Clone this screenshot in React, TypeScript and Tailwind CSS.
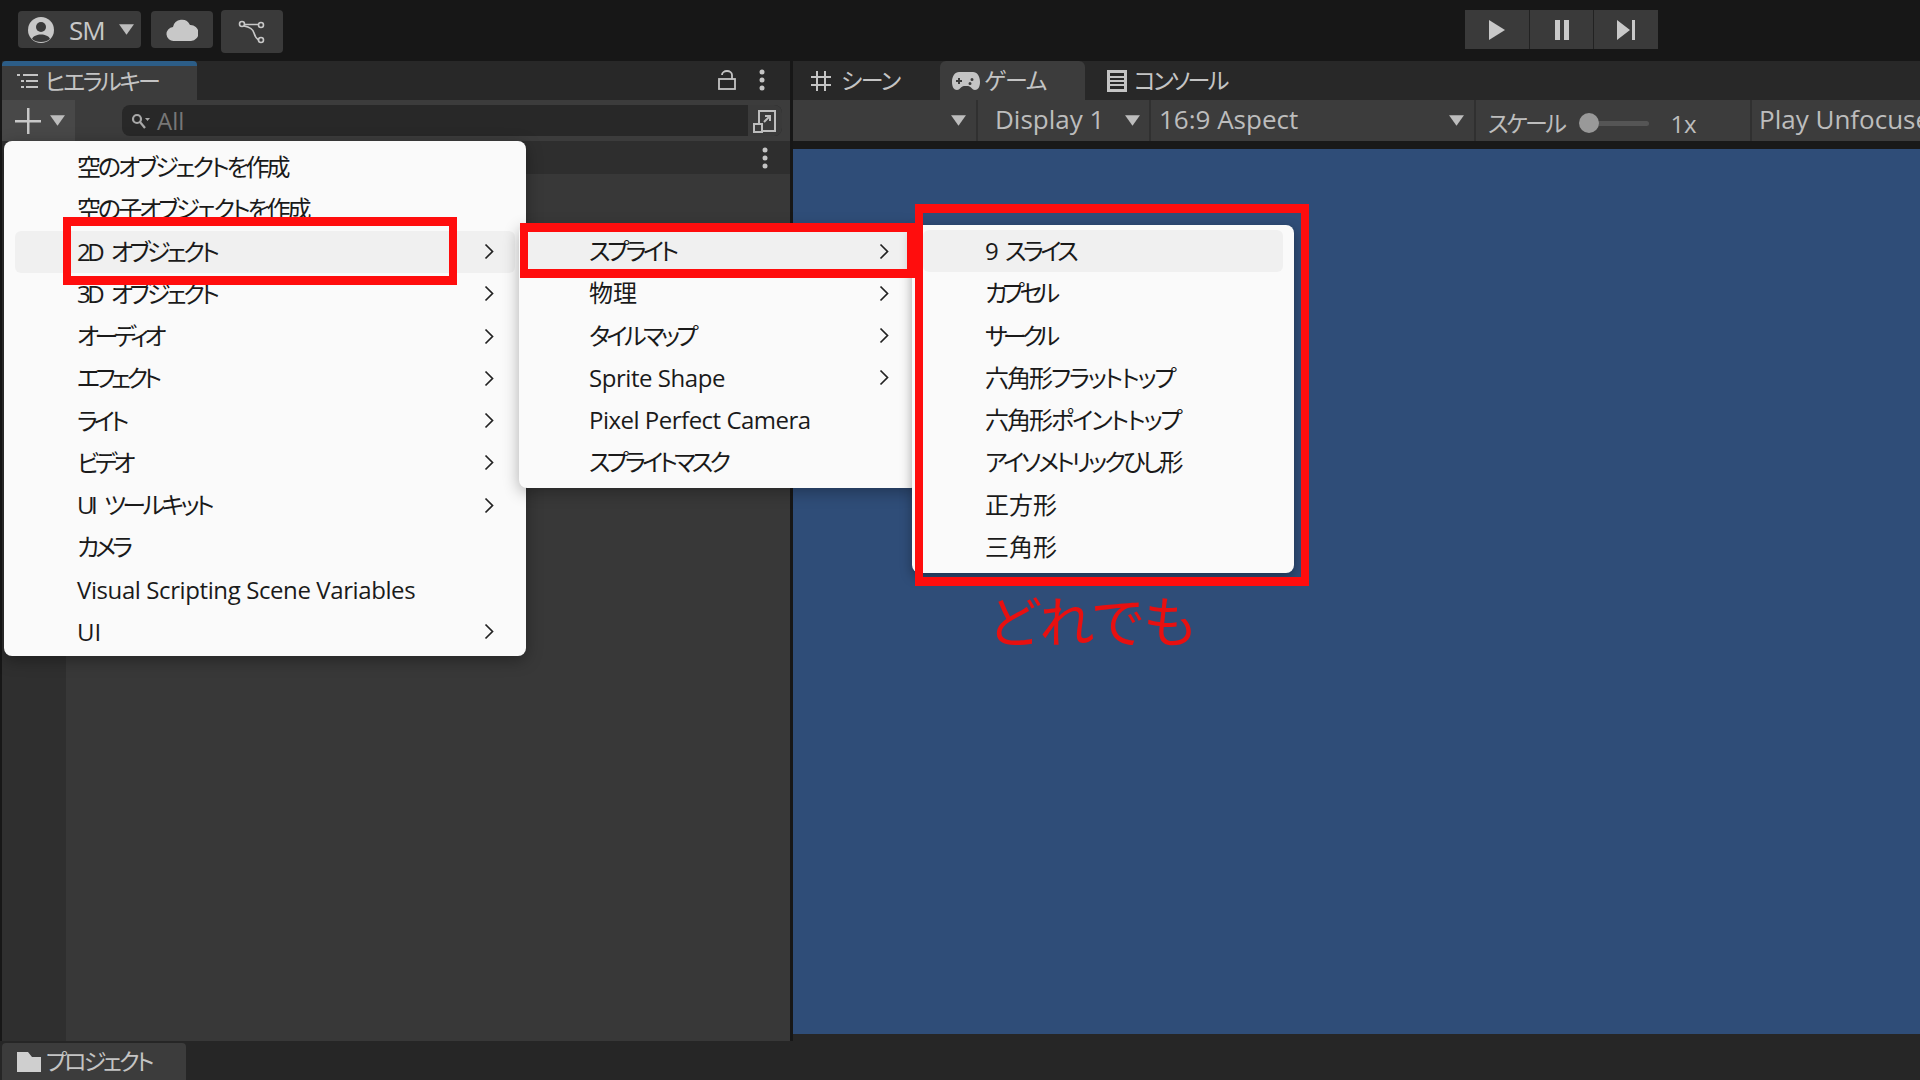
import React from 'react';

type Row = { label: string; arrow?: boolean; active?: boolean; track?: string };

const mainRows: Row[] = [
  { label: '空のオブジェクトを作成', track: 'tracking-[-3px]' },
  { label: '空の子オブジェクトを作成', track: 'tracking-[-3px]' },
  { label: '2D オブジェクト', arrow: true, active: true, track: 'tracking-[-3.500px] [word-spacing:7px]' },
  { label: '3D オブジェクト', arrow: true, track: 'tracking-[-3.500px] [word-spacing:7px]' },
  { label: 'オーディオ', arrow: true, track: 'tracking-[-4.400px]' },
  { label: 'エフェクト', arrow: true, track: 'tracking-[-4.400px]' },
  { label: 'ライト', arrow: true, track: 'tracking-[-4px]' },
  { label: 'ビデオ', arrow: true, track: 'tracking-[-4px]' },
  { label: 'UI ツールキット', arrow: true, track: 'tracking-[-3.500px] [word-spacing:7px]' },
  { label: 'カメラ', track: 'tracking-[-4px]' },
  { label: 'Visual Scripting Scene Variables', track: 'tracking-[-0.400px]' },
  { label: 'UI', arrow: true },
];

const spriteRows: Row[] = [
  { label: 'スプライト', arrow: true, active: true, track: 'tracking-[-3.500px]' },
  { label: '物理', arrow: true },
  { label: 'タイルマップ', arrow: true, track: 'tracking-[-3.500px]' },
  { label: 'Sprite Shape', arrow: true, track: 'tracking-[-0.450px]' },
  { label: 'Pixel Perfect Camera', track: 'tracking-[-0.500px]' },
  { label: 'スプライトマスク', track: 'tracking-[-3.800px]' },
];

const shapeRows: Row[] = [
  { label: '9 スライス', active: true, track: 'tracking-[-3.500px] [word-spacing:7px]' },
  { label: 'カプセル', track: 'tracking-[-4.800px]' },
  { label: 'サークル', track: 'tracking-[-4.800px]' },
  { label: '六角形フラットトップ', track: 'tracking-[-2px]' },
  { label: '六角形ポイントトップ', track: 'tracking-[-2px]' },
  { label: 'アイソメトリックひし形', track: 'tracking-[-3px]' },
  { label: '正方形' },
  { label: '三角形' },
];

const Caret = ({ className = '' }: { className?: string }) => (
  <svg width="17" height="13" viewBox="0 0 16 12" className={`shrink-0 ${className}`}>
    <path d="M1 1h14L8 11z" fill="#bdbdbd" />
  </svg>
);

const Chevron = () => (
  <svg width="10" height="17" viewBox="0 0 10 16" fill="none" stroke="#222" strokeWidth="1.7">
    <path d="M1.500 1l7 7-7 7" />
  </svg>
);

const Dots = () => (
  <svg width="6" height="22" viewBox="0 0 6 22" fill="#c4c4c4">
    <circle cx="3" cy="3" r="2.500" />
    <circle cx="3" cy="11" r="2.500" />
    <circle cx="3" cy="19" r="2.500" />
  </svg>
);

const MenuRow = ({ row, pad, arrowRight }: { row: Row; pad: string; arrowRight: string }) => (
  <div className={`flex h-[42.25px] items-center rounded-md ${pad} ${row.active ? 'bg-[#f0f0f0]' : ''}`}>
    <span className={`flex-1 whitespace-nowrap text-[24px] leading-none text-[#1a1a1a] ${row.track ?? ''}`}>{row.label}</span>
    {row.arrow && <span className={`flex ${arrowRight}`}><Chevron /></span>}
  </div>
);

const Tab = ({ icon, label, active, className = '' }: { icon: React.ReactNode; label: string; active?: boolean; className?: string }) => (
  <div className={`flex h-full shrink-0 items-center whitespace-nowrap text-[23px] text-[#c4c4c4] ${active ? 'bg-[#3c3c3c]' : ''} ${className}`}>
    {icon}
    <span>{label}</span>
  </div>
);

export default function App() {
  return (
    <div
      className="relative flex h-screen w-screen flex-col overflow-hidden bg-[#171717] [font-feature-settings:'palt']"
      style={{ fontFamily: '"Open Sans", "Noto Sans CJK JP", sans-serif' }}
    >
      {/* top toolbar */}
      <div className="flex h-[61px] shrink-0 items-start pt-[11px]">
        <div className="ml-[18px] flex h-[37px] w-[123px] items-center rounded-sm bg-[#3a3a3a] pl-[9px] text-[#c8c8c8]">
          <svg width="28" height="28" viewBox="0 0 28 28">
            <circle cx="14" cy="14" r="13" fill="#c8c8c8" />
            <circle cx="14" cy="11" r="5" fill="#3a3a3a" />
            <path d="M5 23c2-6 16-6 18 0-4 4-14 4-18 0z" fill="#3a3a3a" />
          </svg>
          <span className="ml-[14px] text-[26px] leading-none tracking-[-1px]">SM</span>
          <Caret className="ml-[13px]" />
        </div>
        <div className="ml-[10px] flex h-[37px] w-[62px] items-center justify-center rounded-sm bg-[#3a3a3a]">
          <svg width="32" height="24" viewBox="0 0 32 24" fill="#c8c8c8">
            <path d="M8 23a7 7 0 0 1-1-14 9 9 0 0 1 17-2 8 8 0 0 1 1 16z" />
          </svg>
        </div>
        <div className="ml-[8px] flex h-[43px] w-[62px] -translate-y-px items-center justify-center rounded bg-[#3a3a3a]">
          <svg width="28" height="26" viewBox="0 0 28 26" fill="none" stroke="#c8c8c8" strokeWidth="1.600">
            <circle cx="4" cy="5" r="2.500" />
            <circle cx="23" cy="6" r="2.500" />
            <circle cx="23" cy="21" r="2.500" />
            <path d="M7 5.500h13.500M6 7c6 1 9 3 10 7 1 4 3 6 4.500 7" />
          </svg>
        </div>
        <div className="ml-[1182px] flex h-[39px] w-[193px] -translate-y-px items-stretch gap-px bg-[#222]">
          <div className="flex flex-1 items-center justify-center bg-[#3a3a3a]">
            <svg width="18" height="22" viewBox="0 0 18 22"><path d="M1 1l16 10L1 21z" fill="#c8c8c8" /></svg>
          </div>
          <div className="flex flex-1 items-center justify-center bg-[#3a3a3a]">
            <svg width="16" height="22" viewBox="0 0 16 22" fill="#c8c8c8"><path d="M1 1h5v20H1zM10 1h5v20h-5z" /></svg>
          </div>
          <div className="flex flex-1 items-center justify-center bg-[#3a3a3a]">
            <svg width="20" height="22" viewBox="0 0 20 22" fill="#c8c8c8"><path d="M1 1l13 10L1 21zM16 1h3v20h-3z" /></svg>
          </div>
        </div>
      </div>

      {/* docked panels */}
      <div className="flex min-h-0 flex-1">
        {/* hierarchy */}
        <div className="ml-[2px] flex w-[788px] shrink-0 flex-col">
          <div className="flex h-[39px] shrink-0 items-stretch bg-[#282828]">
            <Tab
              active
              label="ヒエラルキー"
              className="w-[195px] rounded-t-sm border-t-[5px] border-[#2c5d87] pb-[4px] pl-[15px] tracking-[-2.500px]"
              icon={
                <svg width="22" height="18" viewBox="0 0 22 18" className="mr-[6px]" fill="#c4c4c4">
                  <path d="M0 2h3v2H0zM6 2h15v2H6zM4 8h3v2H4zM9 8h12v2H9zM4 14h3v2H4zM9 14h12v2H9z" />
                </svg>
              }
            />
            <div className="ml-auto flex items-center gap-[23px] pb-[2px] pr-[25px]">
              <svg width="18" height="20" viewBox="0 0 18 20" fill="none" stroke="#c4c4c4" strokeWidth="1.800">
                <rect x="1" y="9" width="16" height="10" />
                <path d="M4 5a5 4 0 0 1 10 0v4" />
              </svg>
              <Dots />
            </div>
          </div>
          <div className="flex h-[41px] shrink-0 items-center bg-[#3c3c3c]">
            <div className="flex h-full w-[73px] items-center bg-[#484848] pl-[13px]">
              <svg width="26" height="26" viewBox="0 0 26 26" fill="#c8c8c8"><path d="M12 0h2.500v12H26v2.500H14.500V26H12V14.500H0V12h12z" /></svg>
              <Caret className="ml-[8px]" />
            </div>
            <div className="ml-[47px] flex h-[31px] w-[660px] items-center rounded-lg bg-[#282828] pl-[9px]">
              <svg width="20" height="18" viewBox="0 0 20 18" fill="none" stroke="#a8a8a8" strokeWidth="2.200">
                <circle cx="6" cy="7" r="4" />
                <path d="M9 10l5 6" />
                <path d="M14 6h5l-2.500 3z" fill="#a8a8a8" stroke="none" />
              </svg>
              <span className="ml-[6px] text-[24px] leading-none text-[#777]">All</span>
              <div className="ml-auto flex h-full w-[34px] items-center justify-center rounded-r-lg bg-[#3a3a3a]">
                <svg width="24" height="24" viewBox="0 0 24 24" fill="none" stroke="#bdbdbd" strokeWidth="2">
                  <path d="M6 14V2h16v20H10" />
                  <rect x="1" y="15" width="8" height="8" />
                  <path d="M11 13l6-6M12 7h5v5" />
                </svg>
              </div>
            </div>
          </div>
          <div className="flex h-[33px] shrink-0 items-center justify-end bg-[#2e2e2e] pr-[22px]">
            <Dots />
          </div>
          <div className="flex min-h-0 flex-1">
            <div className="w-[64px] bg-[#2f2f2f]" />
            <div className="flex-1 bg-[#383838]" />
          </div>
        </div>

        {/* game view */}
        <div className="ml-[3px] flex min-w-0 flex-1 flex-col">
          <div className="flex h-[39px] shrink-0 items-stretch bg-[#282828]">
            <Tab
              label="シーン"
              className="w-[147px] pl-[17px] tracking-[-1.500px]"
              icon={
                <svg width="22" height="22" viewBox="0 0 22 22" className="mr-[9px]" fill="none" stroke="#c4c4c4" strokeWidth="2">
                  <path d="M7 1v20M15 1v20M1 7h20M1 15h20" />
                </svg>
              }
            />
            <Tab
              active
              label="ゲーム"
              className="w-[145px] rounded-t-md pl-[11px] tracking-[-1.200px]"
              icon={
                <svg width="30" height="20" viewBox="0 0 30 20" className="mr-[3px]" fill="#c4c4c4">
                  <path fillRule="evenodd" d="M8 1h14c4 0 7 4 7 10 0 5-2 8-5 8-3 0-4-4-7-4h-4c-3 0-4 4-7 4-3 0-5-3-5-8C1 5 4 1 8 1zm-1 6v2H5v2h2v2h2v-2h2V9H9V7zm14 0a1.500 1.500 0 1 0 0 3 1.500 1.500 0 0 0 0-3zm-2 4a1.500 1.500 0 1 0 0 3 1.500 1.500 0 0 0 0-3z" />
                </svg>
              }
            />
            <Tab
              label="コンソール"
              className="pl-[22px] tracking-[-2.500px]"
              icon={
                <svg width="20" height="22" viewBox="0 0 20 22" className="mr-[7px]" fill="#c4c4c4">
                  <path fillRule="evenodd" d="M0 0h20v22H0zM3 3v3h14V3zm0 5v2h14V8zm0 4v2h14v-2zm0 4v3h14v-3z" />
                </svg>
              }
            />
          </div>
          <div className="flex h-[41px] shrink-0 items-stretch whitespace-nowrap bg-[#3c3c3c] text-[26px] leading-none text-[#bdbdbd]">
            <div className="flex w-[185px] shrink-0 items-center justify-end border-r-2 border-[#303030] pr-[9px]">
              <Caret />
            </div>
            <div className="flex w-[173px] shrink-0 items-center border-r-2 border-[#303030] pl-[17px]">
              <span className="-translate-y-[2px]">Display 1</span>
              <Caret className="ml-auto mr-[8px]" />
            </div>
            <div className="flex w-[325px] shrink-0 items-center border-r-2 border-[#303030] pl-[8px]">
              <span className="-translate-y-[2px]">16:9 Aspect</span>
              <Caret className="ml-auto mr-[9px]" />
            </div>
            <div className="flex w-[276px] shrink-0 items-center border-r-2 border-[#303030] pl-[12px]">
              <span className="translate-y-[3px] text-[23px] tracking-[-2.500px]">スケール</span>
              <div className="relative ml-[20px] h-[5px] w-[65px] shrink-0 translate-y-[3px] rounded-full bg-[#555]">
                <div className="absolute left-[-5px] top-[-8px] h-[20px] w-[20px] rounded-full bg-[#999]" />
              </div>
              <span className="ml-[21px] translate-y-[3px] text-[24px]">1x</span>
            </div>
            <div className="flex shrink-0 items-center pl-[7px]">
              <span className="-translate-y-[2px]">Play Unfocused</span>
            </div>
          </div>
          <div className="h-[8px] shrink-0 bg-[#191919]" />
          <div className="flex-1 bg-[#2f4d78]" />
          <div className="h-[7px] shrink-0 bg-[#262626]" />
        </div>
      </div>

      {/* bottom dock */}
      <div className="flex h-[39px] shrink-0 bg-[#262626] pl-[2px] pt-[2px]">
        <div className="flex w-[184px] items-center rounded-t-sm bg-[#3c3c3c] pl-[14px] text-[23px] tracking-[-3px] text-[#c4c4c4]">
          <svg width="26" height="22" viewBox="0 0 26 22" className="mr-[4px]" fill="#cfcfcf"><path d="M1 1h11l4 5h9v15H1z" /></svg>
          プロジェクト
        </div>
      </div>

      {/* context menus */}
      <div className="absolute left-[4px] top-[141px] z-10 h-[515px] w-[522px] rounded-lg bg-[#fafafa] px-[11px] pt-[5px] shadow-[0_4px_16px_rgba(0,0,0,0.35)]">
        {mainRows.map(row => <MenuRow key={row.label} row={row} pad="pl-[62px]" arrowRight="mr-[21px]" />)}
      </div>
      <div className="absolute left-[519px] top-[225px] z-20 h-[263px] w-[400px] rounded-lg bg-[#fafafa] px-[9px] pt-[5px] shadow-[0_4px_16px_rgba(0,0,0,0.3)]">
        {spriteRows.map(row => <MenuRow key={row.label} row={row} pad="pl-[61px]" arrowRight="mr-[21px]" />)}
      </div>
      <div className="absolute left-[912px] top-[225px] z-20 h-[348px] w-[382px] rounded-lg bg-[#fafafa] px-[11px] pt-[5px] shadow-[0_4px_12px_rgba(0,0,0,0.35)]">
        {shapeRows.map(row => <MenuRow key={row.label} row={row} pad="pl-[62px]" arrowRight="" />)}
      </div>

      {/* red annotations */}
      <div className="absolute left-[63px] top-[217px] z-30 h-[68px] w-[394px] border-x-[8px] border-y-[9px] border-[#ff0d0d]" />
      <div className="absolute left-[520px] top-[223px] z-30 h-[55px] w-[395px] border-x-[8px] border-y-[9px] border-[#ff0d0d]" />
      <div className="absolute left-[915px] top-[204px] z-30 h-[382px] w-[394px] border-x-[8px] border-y-[9px] border-[#ff0d0d]" />
      <div className="absolute left-[988px] top-[586px] z-30 text-[55px] font-normal leading-[70px] text-[#e81010]">どれでも</div>
    </div>
  );
}
